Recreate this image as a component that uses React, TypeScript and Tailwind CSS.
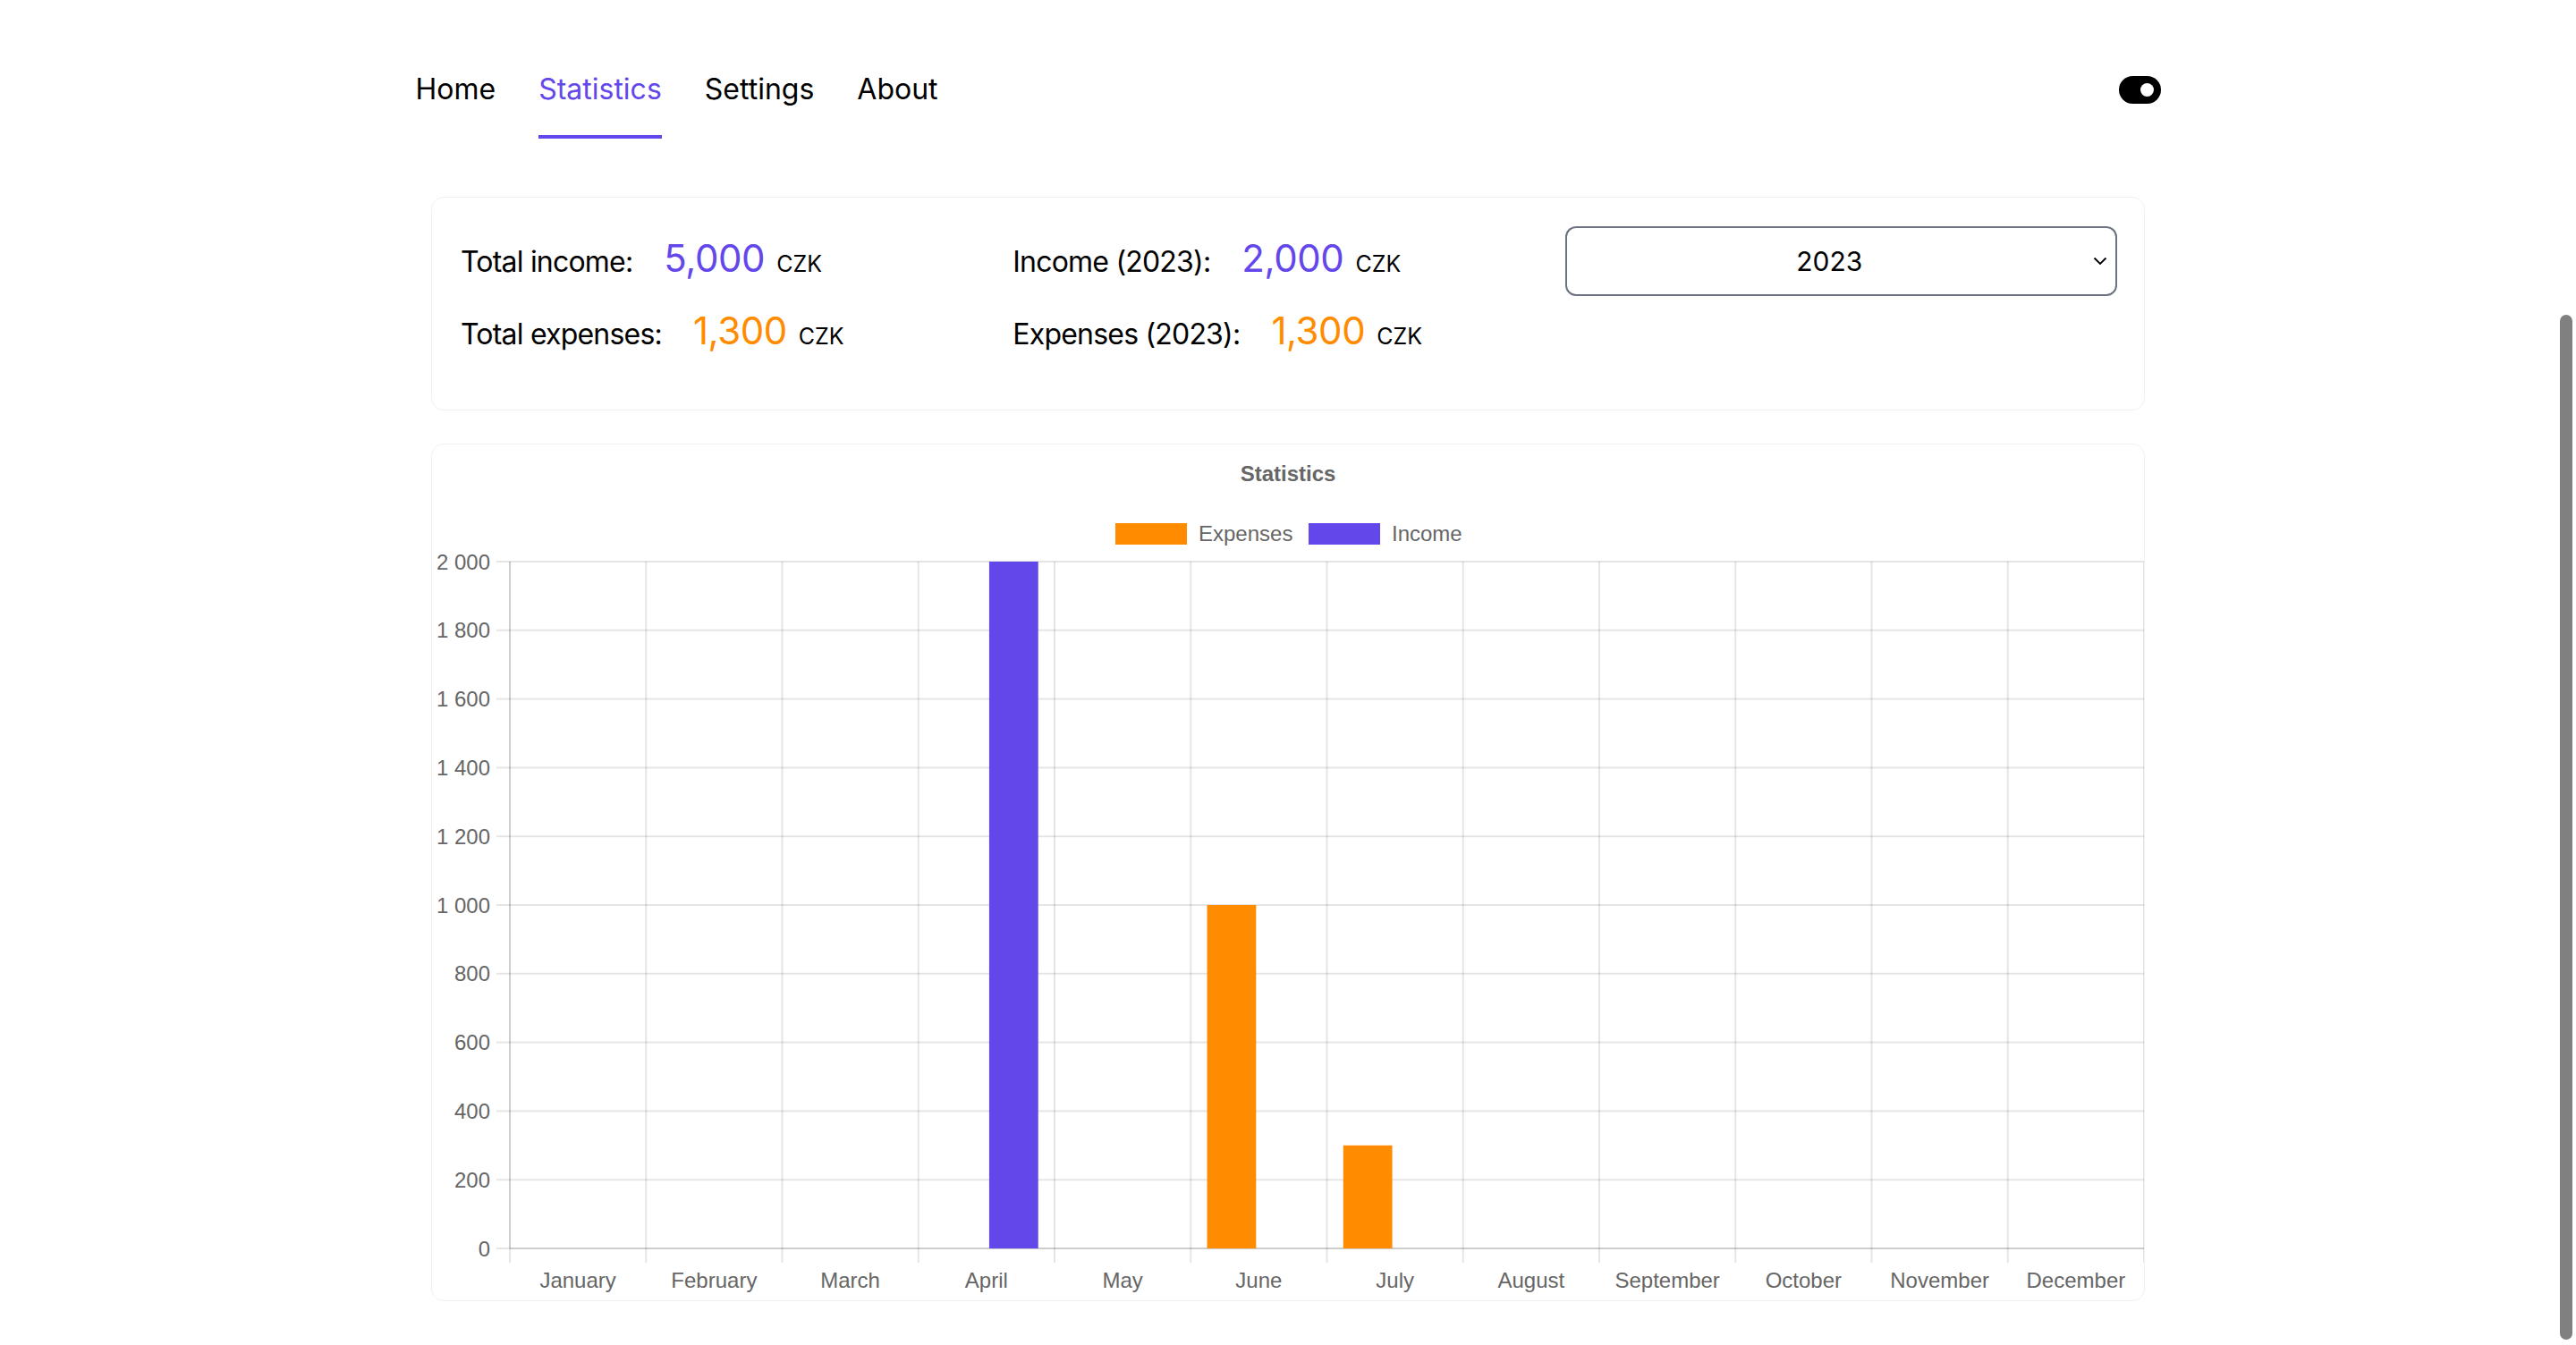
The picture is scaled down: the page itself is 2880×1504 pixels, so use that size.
// Statistics page — summary card, year picker and monthly bar chart.

const MONTHS = [
  'January',
  'February',
  'March',
  'April',
  'May',
  'June',
  'July',
  'August',
  'September',
  'October',
  'November',
  'December',
];

const EXPENSES = [0, 0, 0, 0, 0, 1000, 300, 0, 0, 0, 0, 0];
const INCOME = [0, 0, 0, 2000, 0, 0, 0, 0, 0, 0, 0, 0];
const Y_TICKS = ['2 000', '1 800', '1 600', '1 400', '1 200', '1 000', '800', '600', '400', '200', '0'];

const PURPLE = '#6347ea';
const ORANGE = '#ff8c00';

function NavBar() {
  const items = ['Home', 'Statistics', 'Settings', 'About'];
  return (
    <header className="w-[1951px] mx-auto pt-[84px] flex items-start justify-between">
      <nav className="flex gap-[48px]">
        {items.map((item) => (
          <a
            key={item}
            href="#"
            className={`text-[32px] leading-none pb-[35px] border-b-4 ${
              item === 'Statistics' ? 'text-[#6347ea] border-[#6347ea]' : 'text-black border-transparent'
            }`}
          >
            {item}
          </a>
        ))}
      </nav>
      <button className="mt-[1px] w-[47px] h-[31px] rounded-full bg-black flex items-center justify-end pr-[8px]">
        <span className="w-[15px] h-[15px] rounded-full bg-white" />
      </button>
    </header>
  );
}

function Amount({ label, value, color }: { label: string; value: string; color: string }) {
  return (
    <div className="h-[81px] flex items-baseline">
      <span className="text-[32px] leading-none tracking-[-0.025em] text-black">{label}</span>
      <span className={`ml-[35px] text-[42px] leading-none tracking-[-0.01em] ${color}`}>{value}</span>
      <span className="ml-[13px] text-[25px] leading-none text-black">CZK</span>
    </div>
  );
}

function SummaryCard() {
  return (
    <section className="w-[1916px] mx-auto mt-[65px] bg-white border border-[#f1f1f1] rounded-[14px] pl-[32px] pr-[30px] pt-[32px] pb-[28px] grid grid-cols-3">
      <div className="pt-[15px]">
        <Amount label="Total income:" value="5,000" color="text-[#6347ea]" />
        <Amount label="Total expenses:" value="1,300" color="text-[#ff8c00]" />
      </div>
      <div className="pt-[15px]">
        <Amount label="Income (2023):" value="2,000" color="text-[#6347ea]" />
        <Amount label="Expenses (2023):" value="1,300" color="text-[#ff8c00]" />
      </div>
      <div>
        <div className="relative h-[78px] border-2 border-[#6b7280] rounded-[12px] flex items-center justify-center pr-[26px]">
          <span className="text-[30px] leading-none text-black">2023</span>
          <svg
            className="absolute right-[9px] top-1/2 -translate-y-1/2"
            width="16"
            height="10"
            viewBox="0 0 16 10"
            fill="none"
            stroke="black"
            strokeWidth="1.8"
          >
            <path d="M1.5 1.5 L8 8 L14.5 1.5" />
          </svg>
        </div>
      </div>
    </section>
  );
}

function StatsChart() {
  const W = 1914;
  const H = 957;
  const left = 87;
  const right = 1914;
  const top = 131;
  const bottom = 899;
  const cw = (right - left) / 12;
  const grid = 'rgba(0,0,0,0.1)';
  const font = "'Liberation Sans', Arial, Helvetica, sans-serif";
  const y = (v: number) => bottom - (v / 2000) * (bottom - top);
  const barW = cw * 0.4 * 0.9;

  return (
    <svg width={W} height={H} viewBox={`0 0 ${W} ${H}`} className="block overflow-visible">
      {/* Title */}
      <text x={957} y={41} textAnchor="middle" fontFamily={font} fontSize="24" fontWeight="bold" fill="#666">
        Statistics
      </text>

      {/* Legend */}
      <rect x={764} y={88} width={80} height={24} fill={ORANGE} />
      <text x={857} y={108} fontFamily={font} fontSize="24" fill="#666">
        Expenses
      </text>
      <rect x={980} y={88} width={80} height={24} fill={PURPLE} />
      <text x={1073} y={108} fontFamily={font} fontSize="24" fill="#666">
        Income
      </text>

      {/* Horizontal grid + y ticks */}
      {Y_TICKS.map((t, i) => {
        const gy = top + (i * (bottom - top)) / 10;
        return (
          <g key={t}>
            <line x1={72} x2={right} y1={gy} y2={gy} stroke={grid} strokeWidth="2" />
            <text x={65} y={gy + 8.5} textAnchor="end" fontFamily={font} fontSize="24" fill="#666">
              {t}
            </text>
          </g>
        );
      })}

      {/* Vertical grid + x ticks */}
      {Array.from({ length: 13 }).map((_, i) => {
        const gx = left + i * cw;
        return <line key={i} x1={gx} x2={gx} y1={top} y2={bottom + 16} stroke={grid} strokeWidth="2" />;
      })}

      {/* Axis borders */}
      <line x1={left} x2={left} y1={top} y2={bottom} stroke={grid} strokeWidth="2" />
      <line x1={left} x2={right} y1={bottom} y2={bottom} stroke={grid} strokeWidth="2" />

      {/* Bars */}
      {MONTHS.map((m, i) => {
        const cx = left + cw * (i + 0.5);
        return (
          <g key={m}>
            {EXPENSES[i] > 0 && (
              <rect x={cx - cw * 0.2 - barW / 2} y={y(EXPENSES[i])} width={barW} height={bottom - y(EXPENSES[i])} fill={ORANGE} />
            )}
            {INCOME[i] > 0 && (
              <rect x={cx + cw * 0.2 - barW / 2} y={y(INCOME[i])} width={barW} height={bottom - y(INCOME[i])} fill={PURPLE} />
            )}
            <text x={cx} y={943} textAnchor="middle" fontFamily={font} fontSize="24" fill="#666">
              {m}
            </text>
          </g>
        );
      })}
    </svg>
  );
}

function ChartCard() {
  return (
    <section className="w-[1916px] mx-auto mt-[37px] bg-white border border-[#f1f1f1] rounded-[14px] overflow-hidden">
      <StatsChart />
    </section>
  );
}

export default function App() {
  return (
    <div className="min-h-screen bg-white font-['Inter',_'Noto_Sans',_sans-serif] text-black">
      <NavBar />
      <SummaryCard />
      <ChartCard />
      {/* overlay scrollbar thumb */}
      <div className="fixed right-[4px] top-[352px] w-[14px] h-[1146px] rounded-[7px] bg-[#808080]" />
    </div>
  );
}
